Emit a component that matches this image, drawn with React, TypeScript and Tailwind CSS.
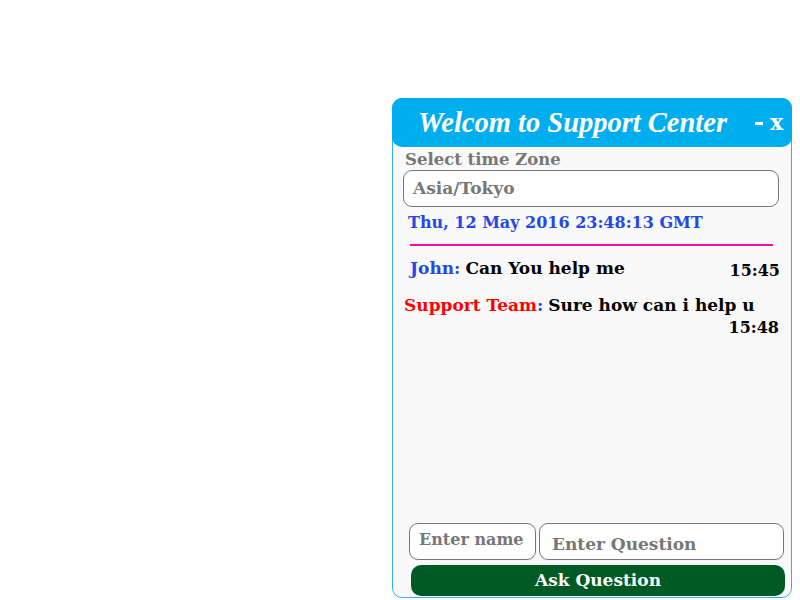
import React from "react";

const serif = "font-['DejaVu_Serif',serif] font-bold";

export default function App() {
  return (
    <div className="w-[800px] h-[600px] bg-white flex justify-end items-start pt-[98px] pr-[8px] overflow-hidden">
      <div className={`w-[400px] h-[500px] shrink-0 border-[1.5px] border-[#33b1e6] rounded-[10px] bg-[#f9f9f9] flex flex-col ${serif}`}>
        <div className="h-[49px] -mt-px -mx-px bg-[#00aeef] rounded-[10px] flex items-center pl-[26px] pr-[9px] text-white">
          <span className="font-['Liberation_Serif',serif] italic text-[28.5px] leading-none whitespace-nowrap flex-1 pt-[2px]">
            Welcom to Support Center
          </span>
          <span className="text-[22px] leading-none pb-[2px] flex items-center gap-[7px]">
            <span className="block w-[8px] h-[3px] bg-white mt-[3px]" />
            <span>x</span>
          </span>
        </div>

        <div className="px-[10px] pt-[3px]">
          <div className="text-[16.5px] leading-[20px] text-[#777] pl-[2px]">Select time Zone</div>
          <div className="h-[37px] w-[376px] border-[1.5px] border-[#777] rounded-[9px] bg-white flex items-center pl-[9px] text-[17px] text-[#777]">
            Asia/Tokyo
          </div>
          <div className="mt-[4px] pl-[5px] text-[16px] leading-[24px] text-[#2447e6]">Thu, 12 May 2016 23:48:13 GMT</div>
          <div className="mt-[9px] ml-[7px] w-[363px] h-[2px] bg-[#f5109f]" />

          <div className="mt-[10px] flex items-start pl-[7px] pr-[1px] text-[17px] leading-[24px]">
            <span className="text-[#2447e6]">John:</span>
            <span className="ml-[5px] text-black flex-1">Can You help me</span>
            <span className="text-black text-[16px] pt-[3px]">15:45</span>
          </div>
          <div className="mt-[11px] pl-[1px] text-[17px] leading-[22px]">
            <span className="text-[#ff0000]">Support Team</span>
            <span className="text-[#2447e6]">:</span>
            <span className="ml-[5px] text-black">Sure how can i help u</span>
          </div>
          <div className="text-right pr-[2px] text-[16px] leading-[24px] text-black">15:48</div>
        </div>

        <div className="flex-1" />

        <div className="flex gap-[3px] pl-[16px]">
          <div className="w-[127px] h-[37px] border-[1.5px] border-[#777] rounded-[9px] bg-white pl-[9px] pt-[4px] text-[16px] text-[#777] leading-[24px] whitespace-nowrap">
            Enter name
          </div>
          <div className="w-[245px] h-[37px] border-[1.5px] border-[#777] rounded-[9px] bg-white pl-[12px] pt-[8px] text-[17px] text-[#777] leading-[24px]">
            Enter Question
          </div>
        </div>
        <div className="mt-[5px] mb-[1px] ml-[18px] w-[374px] h-[31px] rounded-[10px] bg-[#005a24] flex items-center justify-center text-white text-[17px]">
          Ask Question
        </div>
      </div>
    </div>
  );
}
